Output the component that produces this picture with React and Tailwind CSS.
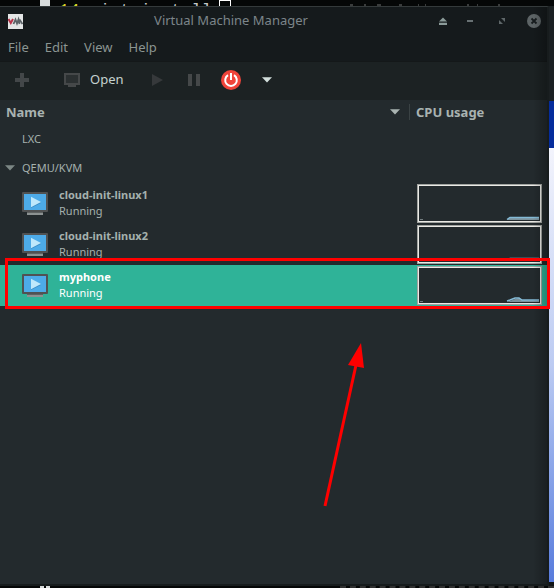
function Caret({ className }) {
  return (
    <svg viewBox="0 0 10 6" className={className} aria-hidden="true">
      <path d="M0 0.3h10L5 5.6z" fill="currentColor" />
    </svg>
  );
}

function MachineIcon() {
  return (
    <svg viewBox="0 0 26 24" className="h-6 w-[26px] shrink-0" aria-hidden="true">
      <rect x="0" y="0" width="26" height="20" rx="1" fill="#505253" />
      <rect x="2" y="2" width="22" height="16" fill="#4dabe8" />
      <path d="M9 5.5v10.5l10-5z" fill="#3a8cc4" />
      <path d="M9 4.7v10.5l10-5.2z" fill="#bfe8fb" />
      <rect x="5" y="20" width="16" height="1" fill="#5d6161" />
      <rect x="5" y="21" width="16" height="2" fill="#8c9292" />
    </svg>
  );
}

function Graph({ busy }) {
  return (
    <svg viewBox="0 0 125 39" className="block h-[39px] w-[125px]" role="img" aria-label="CPU usage graph">
      <rect x="0.5" y="0.5" width="124" height="38" fill="#232a2d" stroke="#a0a3a0" />
      <rect x="1.5" y="1.5" width="122" height="36" fill="none" stroke="#eae9e5" />
      <path d="M3 35.5h3" stroke="#727c7f" />
      <path
        d={busy ? "M90 36l3-1 5-2 4-1 3 2 17 0.5v1.5H90z" : "M90 36l3-2.5h29V36z"}
        fill="#7b929c"
      />
      <path
        d={busy ? "M90 35l3-1 5-2 4 0 3 2h17" : "M90 35.5l3-2h29"}
        fill="none"
        stroke="#84bad6"
        strokeWidth="1.5"
      />
    </svg>
  );
}

const machines = [
  { name: "cloud-init-linux1", state: "Running" },
  { name: "cloud-init-linux2", state: "Running" },
  { name: "myphone", state: "Running", selected: true, busy: true },
];

function TitleBar() {
  return (
    <header className="grid h-7 grid-cols-[27px_1fr_112px] items-center">
      <svg viewBox="0 0 15 15" className="ml-2 size-[15px]" role="img" aria-label="Virtual Machine Manager">
        <rect width="15" height="15" fill="#e4e6e6" />
        <path d="M0.5 5l2.3 4L5 5" fill="none" stroke="#b8354b" strokeWidth="2" />
        <path d="M5.5 10L7.5 5.5l1.5 4 1.5-4 1 4.5M11.5 5.5l3 4.5" fill="none" stroke="#5c6367" strokeWidth="1.8" />
      </svg>
      <h1 className="text-center text-[13px] text-[#7c858a]">Virtual Machine Manager</h1>
      <div className="flex items-center justify-end pr-[5px]">
        <button aria-label="Keep above" className="mr-[11px] grid size-4 place-items-center">
          <svg viewBox="0 0 8 8" className="size-2">
            <path d="M4 0.5l4 4H0zM0 5.8h8V8H0z" fill="#8b9b99" />
          </svg>
        </button>
        <button aria-label="Minimize" className="mr-4 grid size-4 place-items-center">
          <svg viewBox="0 0 6 2" className="h-0.5 w-1.5">
            <path d="M0 0h6v2H0z" fill="#687173" />
          </svg>
        </button>
        <button aria-label="Maximize" className="mr-4 grid size-4 place-items-center">
          <svg viewBox="0 0 6 6" className="size-1.5">
            <path d="M2 0h4v4zM0 2l4 4H0z" fill="#5f6769" />
          </svg>
        </button>
        <button aria-label="Close" className="grid size-4 place-items-center">
          <svg viewBox="0 0 14 14" className="size-3.5">
            <circle cx="7" cy="7" r="7" fill="#5d6466" />
            <path d="M4.5 4.5l5 5M9.5 4.5l-5 5" stroke="#171c1e" strokeWidth="1.8" />
          </svg>
        </button>
      </div>
    </header>
  );
}

function Toolbar() {
  return (
    <div role="toolbar" className="flex h-[39px] items-center border-t border-[#141819] bg-[#1c2223] pb-0.5 pl-3.5">
      <button aria-label="New virtual machine" className="mr-[34px] text-[#434749]">
        <svg viewBox="0 0 16 16" className="block size-4">
          <path d="M6 1h4v5h5v4h-5v5H6v-5H1V6h5z" fill="currentColor" />
        </svg>
      </button>
      <button className="mr-7 flex items-center gap-2.5 text-[13px] text-[#c5d2cf]">
        <svg viewBox="0 0 16 14" className="block h-3.5 w-4" aria-hidden="true">
          <path d="M0 0h16v12H12v2H4v-2H0z" fill="#454849" />
          <path d="M2 2h12v8H2z" fill="#2b3031" />
        </svg>
        Open
      </button>
      <button aria-label="Run" className="mr-[25px] text-[#36393b]">
        <svg viewBox="0 0 11 12" className="block h-3 w-[11px]">
          <path d="M0 0v12l11-6z" fill="currentColor" />
        </svg>
      </button>
      <button aria-label="Pause" className="mr-[21px] text-[#454849]">
        <svg viewBox="0 0 12 12" className="block size-3">
          <path d="M0 0h4v12H0zM8 0h4v12H8z" fill="currentColor" />
        </svg>
      </button>
      <button aria-label="Shut down" className="mr-[21px]">
        <svg viewBox="0 0 20 20" className="block size-5">
          <circle cx="10" cy="10" r="10" fill="#f0443a" />
          <path d="M7 5.2a5.8 5.8 0 1 0 6 0M10 3v7" fill="none" stroke="#fff" strokeWidth="2" />
        </svg>
      </button>
      <button aria-label="Shut down options" className="text-[#d3dfdc]">
        <Caret className="block h-1.5 w-2.5" />
      </button>
    </div>
  );
}

function MachineTable() {
  return (
    <table className="w-full table-fixed border-collapse text-left text-[11px] leading-4">
      <colgroup>
        <col />
        <col className="w-[137px]" />
      </colgroup>
      <thead className="text-[13px] text-[#a9b3b1]">
        <tr className="h-[25px]">
          <th className="p-0 pb-px pl-1.5 font-bold">
            <div className="flex h-4 items-center justify-between border-r border-[#3a4244] pr-[9px]">
              Name
              <Caret className="h-1.5 w-2.5" />
            </div>
          </th>
          <th className="p-0 pb-px pl-1.5 font-bold leading-4">CPU usage</th>
        </tr>
      </thead>
      <tbody className="text-[#a5b1ae]">
        <tr className="h-[29px]">
          <td className="p-0 pb-0.5 pl-[22px]" colSpan={2}>LXC</td>
        </tr>
        <tr className="h-[29px]">
          <td className="p-0 pb-0.5 pl-[5px]" colSpan={2}>
            <div className="flex items-center gap-[7px]">
              <Caret className="h-1.5 w-2.5 text-[#7c8785]" />
              QEMU/KVM
            </div>
          </td>
        </tr>
        {machines.map((m) => (
          <tr key={m.name} className={m.selected ? "h-[41px] bg-[#2fb398] text-white" : "h-[41px]"}>
            <td className="p-0 pl-[22px]">
              <div className="flex items-center gap-[11px]">
                <MachineIcon />
                <div className="pb-0.5">
                  <div className="font-bold">{m.name}</div>
                  <div>{m.state}</div>
                </div>
              </div>
            </td>
            <td className="p-0 pl-[7px]">
              <Graph busy={m.busy} />
            </td>
          </tr>
        ))}
      </tbody>
    </table>
  );
}

export default function App() {
  return (
    <div className="relative flex min-h-screen flex-col overflow-hidden bg-[#050707] font-['Noto_Sans',sans-serif]">
      <div className="relative h-1.5 overflow-hidden">
        <div className="absolute top-0 left-10 h-5 w-2.5 bg-[#d8dcdc]" />
        <div className="absolute top-0.5 left-[59px] whitespace-pre font-['Liberation_Mono',monospace] text-[17px] leading-[17px] text-[#c4c8c8]">
          <span className="text-[#d8d62a]">14</span> virt-install
        </div>
        <div className="absolute top-0 left-[219px] h-5 w-3 border border-white" />
        <svg viewBox="0 0 160 2" className="absolute top-1 left-[350px] h-0.5 w-40" aria-hidden="true">
          <path d="M0 1h3M14 1h2M27 1h4M49 1h3M68 1h1M75 1h1M117 1h2M127 1h1M148 1h2" stroke="#3a3c3c" strokeWidth="2" />
        </svg>
      </div>
      <div className="flex flex-1">
        <main className="relative flex min-w-0 flex-1 flex-col border-t border-r-2 border-b-2 border-[#171c1d] border-t-[#343a3b] bg-[#232a2d]">
          <div className="bg-[#151a1c]">
            <TitleBar />
            <nav className="flex h-[26px] items-center gap-4 pl-2 text-[13px] text-[#8b9592]">
              <button>File</button>
              <button>Edit</button>
              <button>View</button>
              <button>Help</button>
            </nav>
          </div>
          <Toolbar />
          <MachineTable />
          <div className="pointer-events-none absolute inset-y-0 right-0 w-3.5 bg-gradient-to-r from-transparent to-black/25" />
        </main>
        <aside className="flex w-[5px] flex-col" aria-hidden="true">
          <div className="h-[95px] bg-[#1b2022]" />
          <div className="h-[47px] bg-[#052c9c]" />
          <div className="flex-1 bg-gradient-to-b from-[#f3f4fc] via-[#bccbf2] to-[#587bdc]" />
          <div className="h-1 bg-[#111516]" />
        </aside>
      </div>
      <div className="flex h-0.5" aria-hidden="true">
        <div className="ml-10 h-0.5 w-1 bg-[#d8dcdc]" />
        <div className="ml-0.5 h-0.5 w-1 bg-[#d8dcdc]" />
        <div className="ml-[290px] flex-1 border-b-2 border-dashed border-[#303131]" />
      </div>
      <div className="pointer-events-none absolute top-[258px] right-1 left-[5px] h-[51px] border-3 border-[#f00]" />
      <svg viewBox="0 0 44 168" className="pointer-events-none absolute top-[341px] left-[321px] h-[168px] w-11" aria-hidden="true">
        <path d="M4 165L35 24" stroke="#f00" strokeWidth="3" />
        <path d="M40 2L27 24l16 3z" fill="#f00" />
      </svg>
    </div>
  );
}
